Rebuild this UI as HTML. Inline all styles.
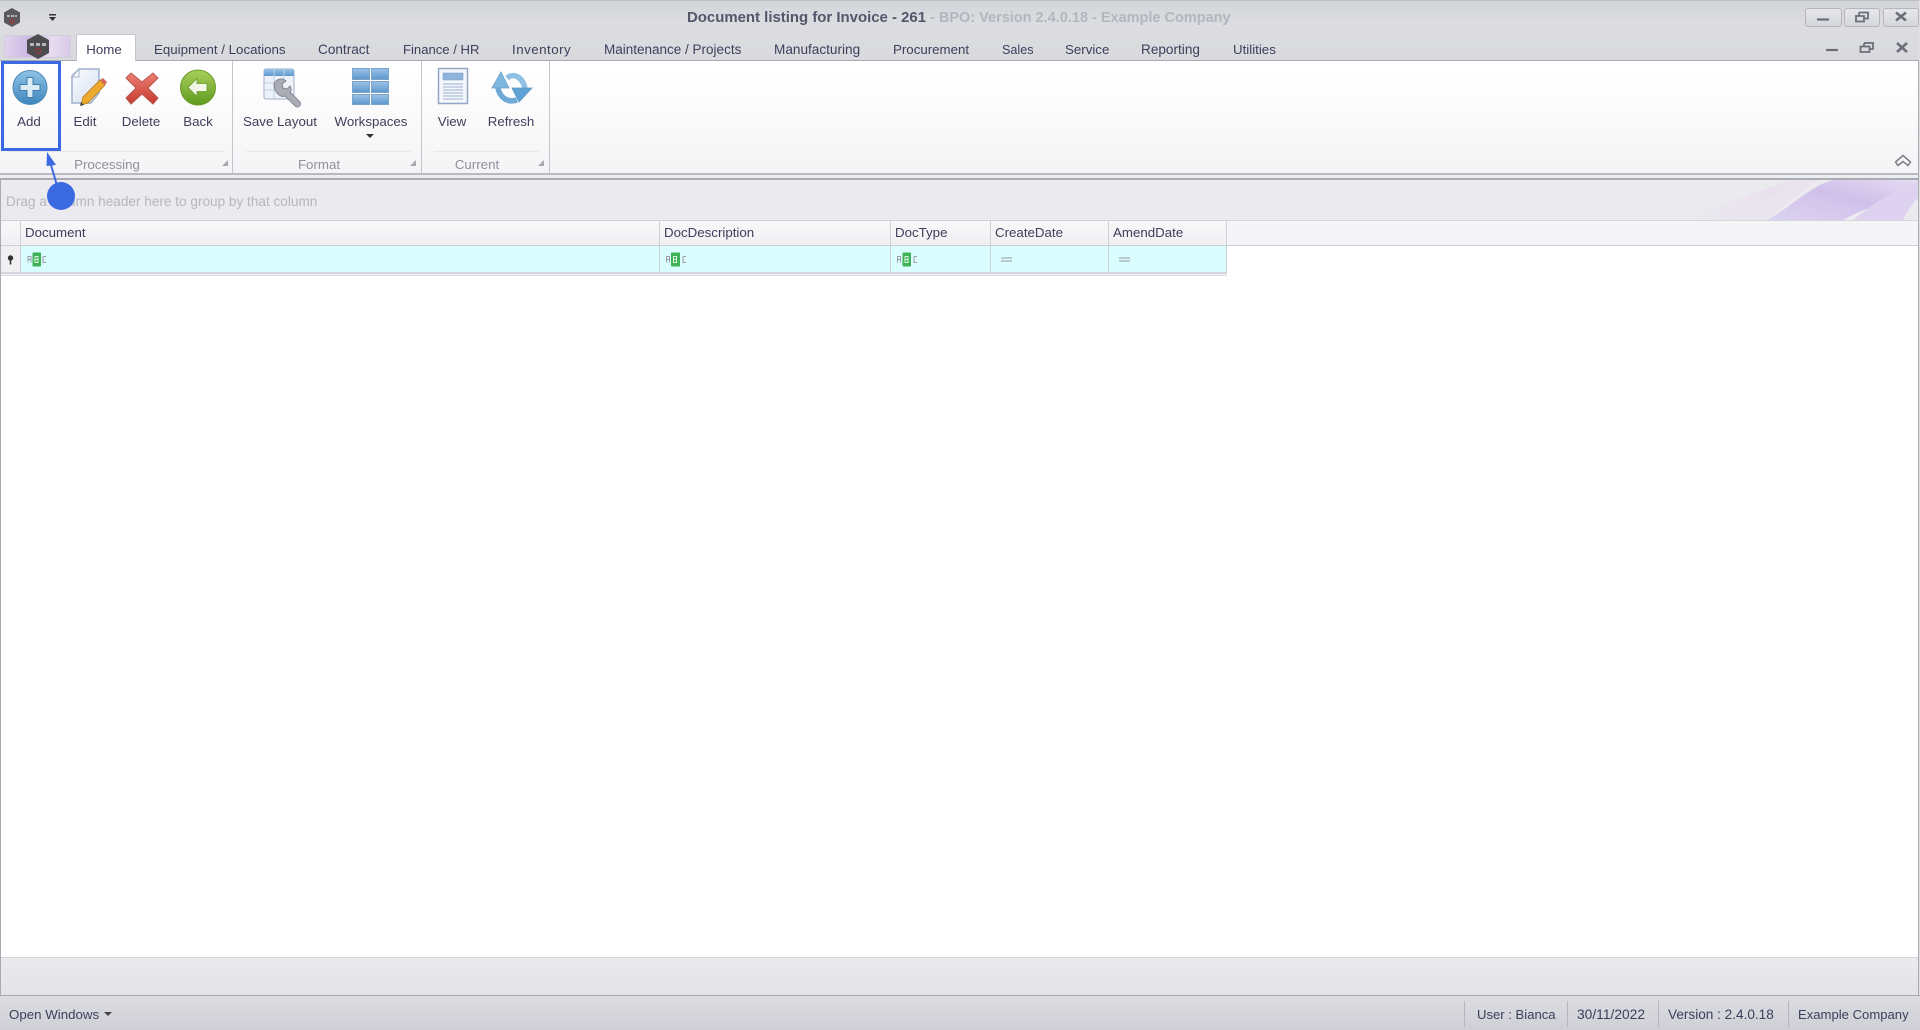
<!DOCTYPE html>
<html><head><meta charset="utf-8"><title>Document listing for Invoice - 261</title>
<style>
html,body{margin:0;padding:0;width:1920px;height:1030px;overflow:hidden;background:#fff}
body{position:relative;font-family:"Liberation Sans",sans-serif;font-size:13.3px;color:#3e3e5a}
.a{position:absolute}
.t{position:absolute;white-space:nowrap;line-height:16px;filter:blur(.3px)}
.s{font-size:13.1px}
.c{transform:translateX(-50%)}
svg{position:absolute;overflow:visible}
</style></head><body>

<!-- title + tab strip -->
<div class="a" style="left:0;top:0;width:1920px;height:60px;background:linear-gradient(#d3d5da,#dcdde1 40%,#d9dade);border-top:1px solid #bfc0c6;box-sizing:border-box"></div>
<div class="a" style="left:0;top:60px;width:1920px;height:1px;background:#a9abb4"></div>

<svg style="left:2px;top:7px" width="20" height="22" viewBox="0 0 20 22"><path d="M10 1l8 4.500v10l-8 4.500-8-4.500v-10z" fill="#5a5a5e"/><path d="M5 8h3v2H5zM9 8h3v2H9zM13 8h2v2h-2z" fill="#b5b5b5"/><circle cx="10" cy="14.500" r="2" fill="none" stroke="#a33" stroke-width="1"/></svg>
<svg style="left:48px;top:13px" width="10" height="10" viewBox="0 0 10 10"><path d="M1 1h7v1.500H1z" fill="#333"/><path d="M1 4h7L4.500 8z" fill="#333"/></svg>

<div class="t" style="left:687px;top:10px;font-weight:bold;font-size:14.95px;color:#54566a">Document listing for Invoice - 261</div>
<div class="t" style="left:930px;top:10px;font-weight:bold;font-size:14.5px;color:#b4b6bf">- BPO: Version 2.4.0.18 - Example Company</div>

<!-- window buttons -->
<div class="a" style="left:1805px;top:8px;width:35px;height:17px;border:1px solid #b5b6bd;border-radius:3px;background:linear-gradient(#e6e7ea,#d6d7dc)"></div>
<div class="a" style="left:1844px;top:8px;width:34px;height:17px;border:1px solid #b5b6bd;border-radius:3px;background:linear-gradient(#e6e7ea,#d6d7dc)"></div>
<div class="a" style="left:1883px;top:8px;width:34px;height:17px;border:1px solid #b5b6bd;border-radius:3px;background:linear-gradient(#e6e7ea,#d6d7dc)"></div>
<svg style="left:0;top:0" width="1920" height="60">
<g fill="none" stroke="#6c6e7a" stroke-width="2.200">
<path d="M1817 19.500h12"/>
<path d="M1859 12.500h9v6h-3M1859 12.500v3M1856 16h8v5.500h-8z" stroke-width="1.800"/>
<path d="M1896 12.500l10 8M1906 12.500l-10 8" stroke-width="2.600"/>
<path d="M1826 50h12"/>
<path d="M1864 43h9v6h-3M1864 43v3M1860.500 46.500h9v5.500h-9z" stroke-width="1.800"/>
<path d="M1897 43l10 9M1907 43l-10 9" stroke-width="2.600"/>
</g></svg>

<!-- app button -->
<div class="a" style="left:4px;top:35px;width:67px;height:23px;border:1px solid #cfcfd8;box-sizing:border-box;border-radius:2px;background:linear-gradient(100deg,#e2d4ee,#cbb6e2 40%,#e8dcf0 70%,#d6c8e6)"></div>
<svg style="left:26px;top:33px" width="24" height="27" viewBox="0 0 24 27"><path d="M12 1l11 6v13l-11 6-11-6v-13z" fill="#4c4c50"/><path d="M4 10h4v3H4zM10 10h4v3h-4zM16 10h4v3h-4z" fill="#b5b5b5"/><circle cx="12" cy="18" r="2.500" fill="none" stroke="#a33" stroke-width="1"/></svg>

<!-- home tab -->
<div class="a" style="left:76px;top:34px;width:60px;height:27px;background:#fff;border:1px solid #c4c5cc;border-bottom:none;box-sizing:border-box;border-radius:2px 2px 0 0"></div>
<div class="t c" style="left:104px;top:42px">Home</div>
<div class="t" style="left:154px;top:42px">Equipment / Locations</div>
<div class="t" style="left:318px;top:42px;font-size:13.6px">Contract</div>
<div class="t" style="left:403px;top:42px;font-size:13.1px">Finance / HR</div>
<div class="t" style="left:512px;top:42px;letter-spacing:.5px">Inventory</div>
<div class="t" style="left:604px;top:42px;font-size:13.5px">Maintenance / Projects</div>
<div class="t" style="left:774px;top:42px;font-size:13.6px">Manufacturing</div>
<div class="t" style="left:893px;top:42px">Procurement</div>
<div class="t" style="left:1002px;top:42px;font-size:12.6px">Sales</div>
<div class="t" style="left:1065px;top:42px">Service</div>
<div class="t" style="left:1141px;top:42px;font-size:13.6px">Reporting</div>
<div class="t" style="left:1233px;top:42px">Utilities</div>

<!-- ribbon -->
<div class="a" style="left:0;top:61px;width:1920px;height:113px;background:linear-gradient(#fff 10%,#f4f4f6)"></div>
<div class="a" style="left:0;top:173px;width:1920px;height:2px;background:#b9bac1"></div>
<div class="a" style="left:0;top:175px;width:1920px;height:3px;background:#ecedf0"></div>
<div class="a" style="left:0;top:178px;width:1920px;height:2px;background:#a9aab2"></div>
<div class="a" style="left:232px;top:61px;width:1px;height:113px;background:#c4c5cb"></div>
<div class="a" style="left:421px;top:61px;width:1px;height:113px;background:#c4c5cb"></div>
<div class="a" style="left:549px;top:61px;width:1px;height:113px;background:#c4c5cb"></div>
<div class="a" style="left:8px;top:151px;width:216px;height:1px;background:#e8e8ec"></div>
<div class="a" style="left:246px;top:151px;width:165px;height:1px;background:#e8e8ec"></div>
<div class="a" style="left:434px;top:151px;width:105px;height:1px;background:#e8e8ec"></div>

<!-- ribbon icons -->
<svg style="left:0;top:0" width="1920" height="175">
<defs>
<linearGradient id="bl" x1="0" y1="0" x2="0" y2="1"><stop offset="0" stop-color="#8fc3e6"/><stop offset="1" stop-color="#3f86bd"/></linearGradient>
<linearGradient id="gr" x1="0" y1="0" x2="0" y2="1"><stop offset="0" stop-color="#a9cf5a"/><stop offset="1" stop-color="#5f9a1f"/></linearGradient>
<linearGradient id="rd" x1="0" y1="0" x2="0" y2="1"><stop offset="0" stop-color="#ec7f72"/><stop offset="1" stop-color="#c63a30"/></linearGradient>
<linearGradient id="pg" x1="0" y1="0" x2="1" y2="1"><stop offset="0" stop-color="#fbfcfe"/><stop offset="1" stop-color="#d4e0f0"/></linearGradient>
<linearGradient id="tb" x1="0" y1="0" x2="0" y2="1"><stop offset="0" stop-color="#9cc3e6"/><stop offset="1" stop-color="#5d97ce"/></linearGradient>
</defs>
<!-- add -->
<circle cx="30" cy="87.500" r="17" fill="url(#bl)" stroke="#4d8bb8"/>
<path d="M27 77.500h6v7h7v6h-7v7h-6v-7h-7v-6h7z" fill="#dcecf7" stroke="#3d7eae" stroke-width="1"/>
<!-- edit -->
<path d="M79 69h20v24l-8 10H72V76z" fill="url(#pg)" stroke="#9fb1cd" stroke-width="1.500"/>
<path d="M72 77h7v-8z" fill="#fff" stroke="#9fb1cd"/>
<path d="M100 80l5 5-17 18-7 2 2-8z" fill="#eeaa2e" stroke="#b37b22" stroke-width=".8"/>
<path d="M100 80l3-2 4 4-2 3z" fill="#d2685f"/>
<path d="M80 106l1-4 3 3z" fill="#444"/>
<!-- delete -->
<path d="M131 73l11 9 11-9 5 5-10 10 10 10-5 6-11-10-11 10-5-6 10-10-10-10z" fill="url(#rd)" stroke="#b8564e" stroke-width="1"/>
<!-- back -->
<circle cx="198" cy="87.500" r="17.500" fill="url(#gr)" stroke="#6b9a2a"/>
<path d="M188 87.500l9-9v5h10v8h-10v5z" fill="#f1f6e6" stroke="#6a9b2a" stroke-width=".8"/>
<!-- save layout -->
<rect x="264" y="69" width="30" height="30" rx="2" fill="#eef2f8" stroke="#9eb0cc"/>
<rect x="264" y="69" width="30" height="7" fill="url(#tb)"/>
<path d="M274 69v30M284 69v10M264 83h14M264 90h14" stroke="#c0cfe2" fill="none"/>
<path d="M274 84c2-5 8-7 12-3l-4 3 1 4 4 1 3-3c2 3 1 5 0 6l10 10c2 3-2 7-5 4l-10-10c-5 2-11-4-11-12z" fill="#a9acb4" stroke="#777a83" stroke-width=".8"/>
<!-- workspaces -->
<g fill="url(#tb)" stroke="#7ba3c9"><rect x="352.500" y="68.500" width="17" height="11"/><rect x="371.500" y="68.500" width="17" height="11"/><rect x="352.500" y="81.500" width="17" height="11"/><rect x="371.500" y="81.500" width="17" height="11"/><rect x="352.500" y="94.500" width="17" height="10"/><rect x="371.500" y="94.500" width="17" height="10"/></g>
<path d="M366 134h8l-4 4z" fill="#333"/>
<!-- view -->
<rect x="438.500" y="68.500" width="29" height="35" fill="#f3f6fb" stroke="#93a6c6" stroke-width="1.500"/>
<rect x="443" y="73" width="20" height="7" fill="#8fb3dc" stroke="#7d9dc5" stroke-width=".5"/>
<path d="M443 84h20M443 87h20M443 90h20M443 93h20M443 96h20M443 99h20" stroke="#9eb0d0" fill="none"/>
<!-- refresh -->
<path d="M507 78C513 73 522 76 525 88" fill="none" stroke="#8fc0e4" stroke-width="5.500"/>
<path d="M498 88C500 98 508 103 517 100" fill="none" stroke="#6fa9d6" stroke-width="5.500"/>
<path d="M501 72l-9 16h17z" fill="#7db6df" stroke="#6ba2cc" stroke-width=".8"/>
<path d="M519 102l-7-14h20z" fill="#5fa3d6" stroke="#5e98c4" stroke-width=".8"/>
<!-- dialog launchers -->
<path d="M228 166v-6l-6 6zM416 166v-6l-6 6zM544 166v-6l-6 6z" fill="#a7a9b2"/>
<!-- collapse -->
<path d="M1895.500 162l7.500-6.500 7.500 6.500-2.500 3.500-5-4-5 4z" fill="none" stroke="#7a7c88" stroke-width="1.500"/>
</svg>

<div class="t c" style="left:29px;top:114px">Add</div>
<div class="t c" style="left:85px;top:114px">Edit</div>
<div class="t c" style="left:141px;top:114px">Delete</div>
<div class="t c" style="left:198px;top:114px">Back</div>
<div class="t c" style="left:280px;top:114px">Save Layout</div>
<div class="t c" style="left:371px;top:114px">Workspaces</div>
<div class="t c" style="left:452px;top:114px">View</div>
<div class="t c" style="left:511px;top:114px">Refresh</div>
<div class="t c" style="left:107px;top:156.500px;color:#8e909c">Processing</div>
<div class="t c" style="left:319px;top:156.500px;color:#8e909c">Format</div>
<div class="t c" style="left:477px;top:156.500px;color:#8e909c">Current</div>

<!-- group panel -->
<div class="a" style="left:0;top:180px;width:1920px;height:40px;background:#ebebef"></div>
<svg style="left:1660px;top:180px" width="258" height="40" viewBox="0 0 258 40">
<defs>
<linearGradient id="p1" x1="0" y1="0" x2="1" y2="0"><stop offset="0" stop-color="#ebebef"/><stop offset=".7" stop-color="#e9deee"/><stop offset="1" stop-color="#ebe3f0"/></linearGradient>
<linearGradient id="p2" x1="0" y1="1" x2="1" y2="0"><stop offset="0" stop-color="#dcd3f0"/><stop offset=".55" stop-color="#d0c0ea"/><stop offset="1" stop-color="#e4dcf2"/></linearGradient>
</defs>
<path d="M20 40L130 0h20L60 40z" fill="url(#p1)" opacity=".8"/>
<path d="M60 40L150 0h8L105 40z" fill="#e9e4ee"/>
<path d="M107 40C130 28 150 6 173 0h85v12c-18 6-50 14-75 28z" fill="url(#p2)"/>
<path d="M193 40c15-12 40-30 65-38v16c-6 6-11 14-15 22z" fill="#ddd2ef"/>
</svg>
<div class="t" style="left:6px;top:194px;color:#b5b6bf;font-size:13.6px">Drag a column header here to group by that column</div>

<!-- grid -->
<div class="a" style="left:0;top:220px;width:1227px;height:1px;background:#cfd0d6"></div>
<div class="a" style="left:1227px;top:220px;width:691px;height:1px;background:#d5d6db"></div>
<div class="a" style="left:0;top:221px;width:1227px;height:24px;background:linear-gradient(#f8f8f9,#f0f0f3)"></div>
<div class="a" style="left:1227px;top:221px;width:691px;height:24px;background:#f5f5f7"></div>
<div class="a" style="left:0;top:245px;width:1918px;height:1px;background:#cfd0d6"></div>
<div class="a" style="left:21px;top:246px;width:1206px;height:26px;background:#dafdff"></div>
<div class="a" style="left:0;top:246px;width:20px;height:26px;background:#f0f0f3"></div>
<div class="a" style="left:0;top:272px;width:1227px;height:2px;background:#d5d6dc"></div>
<div class="a" style="left:0;top:274px;width:1227px;height:1px;background:#f3f3f5"></div>
<div class="a" style="left:0;top:275px;width:1227px;height:1px;background:#dadbe0"></div>
<div class="a" style="left:20px;top:221px;width:1px;height:51px;background:#cfd0d6"></div>
<div class="a" style="left:659px;top:221px;width:1px;height:51px;background:#cfd0d6"></div>
<div class="a" style="left:890px;top:221px;width:1px;height:51px;background:#cfd0d6"></div>
<div class="a" style="left:990px;top:221px;width:1px;height:51px;background:#cfd0d6"></div>
<div class="a" style="left:1108px;top:221px;width:1px;height:51px;background:#cfd0d6"></div>
<div class="a" style="left:1226px;top:221px;width:1px;height:51px;background:#cfd0d6"></div>

<div class="t" style="left:25px;top:225px">Document</div>
<div class="t" style="left:664px;top:225px">DocDescription</div>
<div class="t" style="left:895px;top:225px">DocType</div>
<div class="t" style="left:995px;top:225px">CreateDate</div>
<div class="t" style="left:1113px;top:225px">AmendDate</div>

<svg style="left:0;top:240px" width="1240" height="40">
<circle cx="10.500" cy="18" r="2.200" fill="#333" stroke="#333" stroke-width="1"/><path d="M10.500 20v4.500" stroke="#333" stroke-width="1.500"/>
<g fill="#3fb257"><rect x="32.500" y="12.500" width="8.500" height="14" rx="1"/><rect x="671" y="12.500" width="9" height="14" rx="1"/><rect x="902.500" y="12.500" width="8.500" height="14" rx="1"/></g>
<g fill="none" stroke="#d8f5de" stroke-width="1"><path d="M35 16.500h3v6h-3zM35 19.500h3M673.500 16.500h3v6h-3zM673.500 19.500h3M905 16.500h3v6h-3zM905 19.500h3"/></g>
<g fill="none" stroke="#9a9ca6" stroke-width="1"><path d="M28 22.500v-6h3v6M28 19.500h3M43 16.500h3M43 16.500v6h3M666.500 22.500v-6h3v6M666.500 19.500h3M683 16.500h3M683 16.500v6h3M897.500 22.500v-6h3v6M897.500 19.500h3M914 16.500h3M914 16.500v6h3"/></g>
<path d="M1001 18h11M1001 21h11M1119 18h11M1119 21h11" stroke="#a8aab2" stroke-width="1.200" fill="none"/>
</svg>

<!-- borders -->
<div class="a" style="left:0;top:180px;width:1px;height:816px;background:#a9aab2"></div>
<div class="a" style="left:1918px;top:61px;width:1px;height:935px;background:#a9aab2"></div>
<div class="a" style="left:1919px;top:0;width:1px;height:1030px;background:#e0e0e4"></div>

<!-- bottom panel -->
<div class="a" style="left:1px;top:957px;width:1917px;height:1px;background:#d4d5da"></div>
<div class="a" style="left:1px;top:958px;width:1917px;height:37px;background:linear-gradient(#ebebee,#e2e3e7)"></div>
<div class="a" style="left:0;top:995px;width:1920px;height:1px;background:#a4a5ad"></div>

<!-- status bar -->
<div class="a" style="left:0;top:996px;width:1920px;height:34px;background:linear-gradient(#dcdde1,#cfd0d6)"></div>
<div class="a" style="left:1464px;top:1001px;width:1px;height:26px;background:#b5b6bd"></div>
<div class="a" style="left:1567px;top:1001px;width:1px;height:26px;background:#b5b6bd"></div>
<div class="a" style="left:1658px;top:1001px;width:1px;height:26px;background:#b5b6bd"></div>
<div class="a" style="left:1788px;top:1001px;width:1px;height:26px;background:#b5b6bd"></div>
<div class="t s" style="left:9px;top:1006.500px;font-size:13.3px">Open Windows</div>
<svg style="left:104px;top:1012px" width="8" height="5"><path d="M0 0h8L4 4z" fill="#444"/></svg>
<div class="t s" style="left:1477px;top:1006.500px">User : Bianca</div>
<div class="t s" style="left:1577px;top:1006.500px;font-size:13.8px">30/11/2022</div>
<div class="t s" style="left:1668px;top:1006.500px;font-size:13.6px">Version : 2.4.0.18</div>
<div class="t s" style="left:1798px;top:1006.500px">Example Company</div>

<!-- annotation -->
<div class="a" style="left:1px;top:61px;width:60px;height:90px;border:3px solid #3b69e2;box-sizing:border-box"></div>
<svg style="left:0;top:0" width="120" height="220">
<path d="M47 152l9 13-9.500 1z" fill="#3b69e2"/>
<path d="M51 165l7 24" stroke="#3b69e2" stroke-width="2" fill="none"/>
<circle cx="61" cy="196" r="14" fill="#3b69e2"/>
</svg>
</body></html>
